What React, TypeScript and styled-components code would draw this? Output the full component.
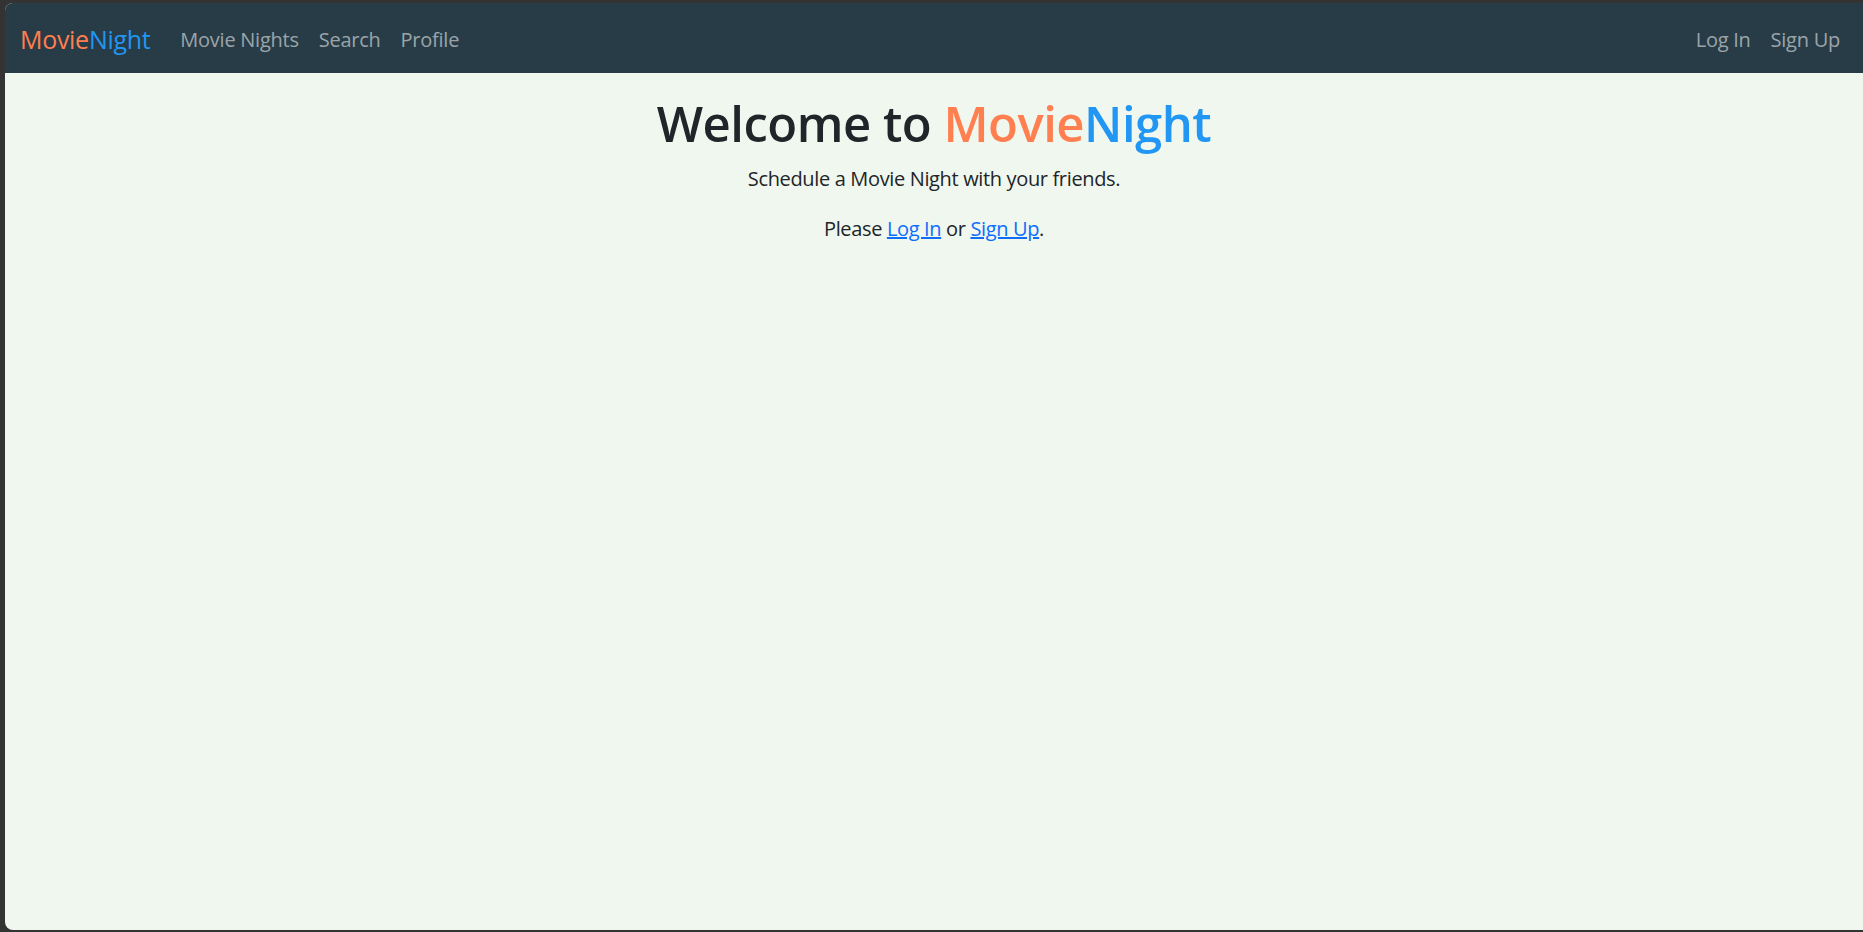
import styled, { createGlobalStyle } from 'styled-components'

const GlobalStyle = createGlobalStyle`
  html, body {
    margin: 0;
    padding: 0;
    height: 100%;
    background: #333333;
  }

  body {
    font-family: "Open Sans", "Noto Sans", "Liberation Sans", sans-serif;
    overflow: hidden;
  }
`

const Window = styled.div`
  display: flex;
  flex-direction: column;
  height: 927px;
  margin: 3px 0 2px 5px;
  border-radius: 8px 0 0 8px;
  overflow: hidden;
  background: #f0f7ee;
`

const Navbar = styled.nav`
  box-sizing: border-box;
  display: flex;
  align-items: center;
  height: 70px;
  padding: 4px 13px 0 15px;
  background: #273c46;
`

const Brand = styled.a`
  margin-right: 20px;
  font-size: 25px;
  line-height: 1.5;
  letter-spacing: -0.3px;
  text-decoration: none;
  cursor: pointer;
`

const Movie = styled.span`
  color: #ff7f50;
`

const Night = styled.span`
  color: #2196f3;
`

const NavList = styled.ul<{ $end?: boolean }>`
  display: flex;
  margin: 0;
  padding: 0;
  list-style: none;
  margin-left: ${({ $end }) => ($end ? 'auto' : '0')};
`

const NavLink = styled.a`
  display: block;
  padding: 8px 10px;
  font-size: 20px;
  line-height: 1.5;
  letter-spacing: -0.25px;
  color: rgba(255, 255, 255, 0.55);
  text-decoration: none;
  cursor: pointer;

  &:hover {
    color: rgba(255, 255, 255, 0.75);
  }
`

const Main = styled.main`
  flex: 1;
  padding-top: 21px;
  text-align: center;
  color: #212529;
`

const Title = styled.h1`
  margin: 0 0 11px;
  font-size: 49px;
  font-weight: 600;
  line-height: 1.2;
  letter-spacing: -0.5px;
`

const Lead = styled.p`
  margin: 0 0 20px;
  font-size: 20px;
  line-height: 1.5;
  letter-spacing: -0.35px;
`

const TextLink = styled.a`
  color: #0d6efd;
  text-decoration: underline;
  cursor: pointer;
`

export default function App() {
  return (
    <>
      <GlobalStyle />
      <Window>
        <Navbar>
          <Brand>
            <Movie>Movie</Movie>
            <Night>Night</Night>
          </Brand>
          <NavList>
            <li><NavLink>Movie Nights</NavLink></li>
            <li><NavLink>Search</NavLink></li>
            <li><NavLink>Profile</NavLink></li>
          </NavList>
          <NavList $end>
            <li><NavLink>Log In</NavLink></li>
            <li><NavLink>Sign Up</NavLink></li>
          </NavList>
        </Navbar>
        <Main>
          <Title>
            Welcome to <Movie>Movie</Movie>
            <Night>Night</Night>
          </Title>
          <Lead>Schedule a Movie Night with your friends.</Lead>
          <Lead>
            Please <TextLink>Log In</TextLink> or <TextLink>Sign Up</TextLink>.
          </Lead>
        </Main>
      </Window>
    </>
  )
}
